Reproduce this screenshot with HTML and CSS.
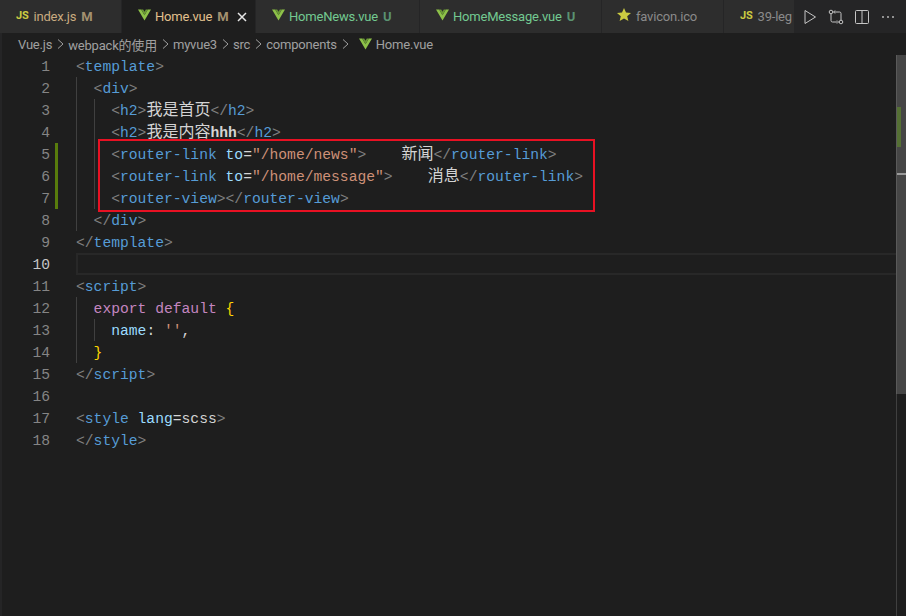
FILE: index.html
```html
<!DOCTYPE html>
<html lang="en">
<head>
  <meta charset="UTF-8">
  <meta name="viewport" content="width=device-width, initial-scale=1.0">
  <title>Home.vue - Visual Studio Code</title>
  <link rel="stylesheet" href="styles.css">
</head>
<body>
  <svg class="defs" width="0" height="0">
    <symbol id="vue" viewBox="0 0 14 12">
      <path d="M0 0h3.400L7 6.200 10.600 0H14L7 12z" fill="#8dc149"/>
      <path d="M3.400 0h2.200L7 2.600 8.400 0h2.200L7 6.200z" fill="#6a9a35"/>
    </symbol>
    <symbol id="chevron" viewBox="0 0 16 12">
      <path d="M6 1.500L11 6l-5 4.500" fill="none" stroke="#a0a0a0" stroke-width="1"/>
    </symbol>
  </svg>

  <div class="window">
    <div class="tabbar">
      <div class="tabs">
        <div class="tab tab-index">
          <span class="js-icon">JS</span>
          <span class="tab-name modified-dim">index.js</span>
          <span class="badge badge-m">M</span>
        </div>
        <div class="tab tab-home active">
          <svg class="vue-icon"><use href="#vue"/></svg>
          <span class="tab-name modified">Home.vue</span>
          <span class="badge badge-m">M</span>
          <svg class="close" viewBox="0 0 10 10"><path d="M1 1l8 8M9 1l-8 8"/></svg>
        </div>
        <div class="tab tab-news">
          <svg class="vue-icon"><use href="#vue"/></svg>
          <span class="tab-name untracked">HomeNews.vue</span>
          <span class="badge badge-u">U</span>
        </div>
        <div class="tab tab-message">
          <svg class="vue-icon"><use href="#vue"/></svg>
          <span class="tab-name untracked">HomeMessage.vue</span>
          <span class="badge badge-u">U</span>
        </div>
        <div class="tab tab-favicon">
          <svg class="star" viewBox="0 0 14 13"><path d="M7 0l2 4.600 5 .4-3.800 3.200L11.400 13 7 10.400 2.600 13l1.200-4.800L0 5l5-.4z"/></svg>
          <span class="tab-name plain">favicon.ico</span>
        </div>
        <div class="tab tab-legacy">
          <span class="js-icon">JS</span>
          <span class="tab-name plain">39-leg</span>
        </div>
      </div>
      <div class="actions">
        <svg class="action" viewBox="0 0 16 16"><path d="M3 1.500l10.500 6.500L3 14.500z"/></svg>
        <svg class="action" viewBox="0 0 16 16"><circle cx="3" cy="3" r="1.800"/><circle cx="13" cy="13" r="1.800"/><path d="M3 5v6.500a1.500 1.500 0 0 0 1.500 1.500H9M7 1.500L5.500 3 7 4.500M9 11.500l1.500 1.500L9 14.500M13 11V4.500A1.500 1.500 0 0 0 11.500 3H6"/></svg>
        <svg class="action" viewBox="0 0 16 16"><rect x="1.500" y="1.500" width="13" height="13" rx="1"/><path d="M8 1.500v13"/></svg>
        <svg class="action dots" viewBox="0 0 16 16"><circle cx="3" cy="8" r=".9"/><circle cx="8" cy="8" r=".9"/><circle cx="13" cy="8" r=".9"/></svg>
      </div>
    </div>

    <div class="breadcrumb">
      <span>Vue.js</span><svg class="sep"><use href="#chevron"/></svg>
      <span>webpack的使用</span><svg class="sep"><use href="#chevron"/></svg>
      <span>myvue3</span><svg class="sep"><use href="#chevron"/></svg>
      <span>src</span><svg class="sep"><use href="#chevron"/></svg>
      <span>components</span><svg class="sep"><use href="#chevron"/></svg>
      <svg class="vue-icon"><use href="#vue"/></svg>
      <span>Home.vue</span>
    </div>

    <div class="editor">
      <div class="line"><span class="num">1</span><span class="gutter"></span><span class="code"><i>&lt;</i><b>template</b><i>&gt;</i></span></div>
      <div class="line"><span class="num">2</span><span class="gutter"></span><span class="code"><span class="indent"></span><i>&lt;</i><b>div</b><i>&gt;</i></span></div>
      <div class="line"><span class="num">3</span><span class="gutter"></span><span class="code"><span class="indent"></span><span class="indent"></span><i>&lt;</i><b>h2</b><i>&gt;</i><span class="cjk">我是首页</span><i>&lt;/</i><b>h2</b><i>&gt;</i></span></div>
      <div class="line"><span class="num">4</span><span class="gutter"></span><span class="code"><span class="indent"></span><span class="indent"></span><i>&lt;</i><b>h2</b><i>&gt;</i><span class="cjk">我是内容</span><span class="text bold">hhh</span><i>&lt;/</i><b>h2</b><i>&gt;</i></span></div>
      <div class="line changed"><span class="num">5</span><span class="gutter"></span><span class="code"><span class="indent"></span><span class="indent"></span><i>&lt;</i><b>router-link</b> <em>to</em><span class="text">=</span><u>"/home/news"</u><i>&gt;</i>    <span class="cjk">新闻</span><i>&lt;/</i><b>router-link</b><i>&gt;</i></span></div>
      <div class="line changed"><span class="num">6</span><span class="gutter"></span><span class="code"><span class="indent"></span><span class="indent"></span><i>&lt;</i><b>router-link</b> <em>to</em><span class="text">=</span><u>"/home/message"</u><i>&gt;</i>    <span class="cjk">消息</span><i>&lt;/</i><b>router-link</b><i>&gt;</i></span></div>
      <div class="line changed"><span class="num">7</span><span class="gutter"></span><span class="code"><span class="indent"></span><span class="indent"></span><i>&lt;</i><b>router-view</b><i>&gt;&lt;/</i><b>router-view</b><i>&gt;</i></span></div>
      <div class="line"><span class="num">8</span><span class="gutter"></span><span class="code"><span class="indent"></span><i>&lt;/</i><b>div</b><i>&gt;</i></span></div>
      <div class="line"><span class="num">9</span><span class="gutter"></span><span class="code"><i>&lt;/</i><b>template</b><i>&gt;</i></span></div>
      <div class="line current"><span class="num">10</span><span class="gutter"></span><span class="code"></span></div>
      <div class="line"><span class="num">11</span><span class="gutter"></span><span class="code"><i>&lt;</i><b>script</b><i>&gt;</i></span></div>
      <div class="line"><span class="num">12</span><span class="gutter"></span><span class="code"><span class="indent"></span><span class="kw">export default</span> <span class="brace">{</span></span></div>
      <div class="line"><span class="num">13</span><span class="gutter"></span><span class="code"><span class="indent"></span><span class="indent"></span><em>name</em><span class="text">: </span><u>''</u><span class="text">,</span></span></div>
      <div class="line"><span class="num">14</span><span class="gutter"></span><span class="code"><span class="indent"></span><span class="brace">}</span></span></div>
      <div class="line"><span class="num">15</span><span class="gutter"></span><span class="code"><i>&lt;/</i><b>script</b><i>&gt;</i></span></div>
      <div class="line"><span class="num">16</span><span class="gutter"></span><span class="code"></span></div>
      <div class="line"><span class="num">17</span><span class="gutter"></span><span class="code"><i>&lt;</i><b>style</b> <em>lang</em><span class="text">=scss</span><i>&gt;</i></span></div>
      <div class="line"><span class="num">18</span><span class="gutter"></span><span class="code"><i>&lt;/</i><b>style</b><i>&gt;</i></span></div>

      <!-- annotation drawn over the code -->
      <div class="highlight-box"></div>
      <div class="scrollbar">
        <div class="scroll-thumb"></div>
        <div class="scroll-change"></div>
        <div class="scroll-cursor"></div>
      </div>
    </div>
  </div>
</body>
</html>
```

FILE: styles.css
```css
* {
  box-sizing: border-box;
}
html, body {
  height: 100%;
}
body {
  margin: 0;
  background: #1e1e1e;
  font-family: Roboto, 'Noto Sans CJK SC', sans-serif;
  overflow: hidden;
}
.defs {
  position: absolute;
}
.window {
  display: flex;
  flex-direction: column;
  height: 100%;
  border-left: 2px solid #252526;
}

/* Tabs */
.tabbar {
  display: flex;
  height: 33px;
  background: #252526;
  margin-left: -2px;
}
.tabs {
  display: flex;
  width: 794px;
  overflow: hidden;
}
.tab {
  flex: none;
  display: flex;
  align-items: center;
  height: 33px;
  padding-left: 16px;
  background: #2d2d2d;
  border-right: 1px solid #252526;
  font-size: 13px;
  letter-spacing: -0.2px;
  white-space: nowrap;
}
.tab.active {
  background: #1e1e1e;
}
.tab-index { width: 122px; }
.tab-home { width: 134px; }
.tab-news { width: 164px; }
.tab-message { width: 182px; }
.tab-favicon { width: 122px; padding-left: 15px; }
.tab-legacy { width: 70px; padding-left: 16px; border-right: none; }
.tab-name {
  margin-left: 4px;
}
.tab-index .tab-name,
.tab-legacy .tab-name {
  margin-left: 5px;
}
.tab-favicon .tab-name {
  margin-left: 5px;
}
.modified { color: #e2c08d; }
.modified-dim { color: #c9ab80; }
.untracked { color: #73c991; }
.plain { color: #8a8a8a; }
.badge {
  margin-left: 5px;
  font-size: 13px;
  font-weight: 700;
}
.badge-m { color: #a3906f; }
.badge-u { color: #5a9271; }
.js-icon {
  color: #cbcb41;
  font-size: 11px;
  font-weight: 700;
  line-height: 1;
  margin-bottom: 3px;
}
.vue-icon {
  flex: none;
  width: 13px;
  height: 12px;
  margin-bottom: 4px;
}
.star {
  flex: none;
  width: 14px;
  height: 13px;
  margin-bottom: 4px;
  fill: #cbcb41;
}
.close {
  width: 10px;
  height: 10px;
  margin-left: 9px;
  fill: none;
  stroke: #e6e6e6;
  stroke-width: 1.500;
}
.actions {
  flex: 1;
  display: flex;
  align-items: center;
  gap: 10px;
  padding-left: 8px;
}
.action {
  width: 16px;
  height: 16px;
  fill: none;
  stroke: #c5c5c5;
  stroke-width: 1;
}
.action.dots {
  fill: #c5c5c5;
  stroke: none;
}

/* Breadcrumb */
.breadcrumb {
  display: flex;
  align-items: center;
  height: 22px;
  padding-left: 16px;
  color: #a0a0a0;
  font-size: 13px;
  letter-spacing: -0.2px;
  white-space: nowrap;
}
.breadcrumb .sep {
  flex: none;
  width: 16px;
  height: 12px;
}
.breadcrumb .vue-icon {
  margin: 0 4px 0 6px;
}

/* Code */
.editor {
  position: relative;
  flex: 1;
  font-family: 'Liberation Mono', monospace;
  font-size: 14.67px;
  line-height: 24px;
}
.line {
  display: flex;
  height: 22px;
  white-space: pre;
}
.num {
  width: 48px;
  text-align: right;
  color: #858585;
}
.current .num {
  color: #c6c6c6;
}
.gutter {
  width: 26px;
}
.changed .gutter::before {
  content: "";
  display: block;
  width: 3px;
  height: 22px;
  margin-left: 5px;
  background: #587c0c;
}
.code {
  flex: 1;
}
.current .code {
  box-shadow: inset 0 0 0 2px #282828;
}
.indent {
  display: inline-block;
  width: 17.6px;
  height: 22px;
  vertical-align: top;
  border-left: 1px solid #404040;
}
.code i { font-style: normal; color: #808080; }
.code b { font-weight: normal; color: #569cd6; }
.code em { font-style: normal; color: #9cdcfe; }
.code u { text-decoration: none; color: #ce9178; }
.text { color: #d4d4d4; }
.bold { font-weight: bold; }
.kw { color: #c586c0; }
.brace { color: #ffd700; }
.cjk {
  font-family: 'Noto Sans CJK SC', sans-serif;
  font-size: 16px;
  line-height: 0;
  color: #d4d4d4;
}
.highlight-box {
  position: absolute;
  left: 96px;
  top: 84px;
  width: 497px;
  height: 73px;
  border: 2px solid #e81123;
}
.scrollbar {
  position: absolute;
  right: 0;
  top: 0;
  bottom: 0;
  width: 10px;
  border-left: 1px solid #404040;
}
.scroll-thumb {
  position: absolute;
  left: -1px;
  right: 0;
  top: 0;
  height: 339px;
  background: #464646;
  border-left: 1px solid #5a5a5a;
}
.scroll-change {
  position: absolute;
  left: 0;
  top: 52px;
  width: 4px;
  height: 40px;
  background: #557034;
}
.scroll-cursor {
  position: absolute;
  left: 0;
  right: 0;
  top: 118px;
  height: 2px;
  background: #9a9a9a;
}
```
